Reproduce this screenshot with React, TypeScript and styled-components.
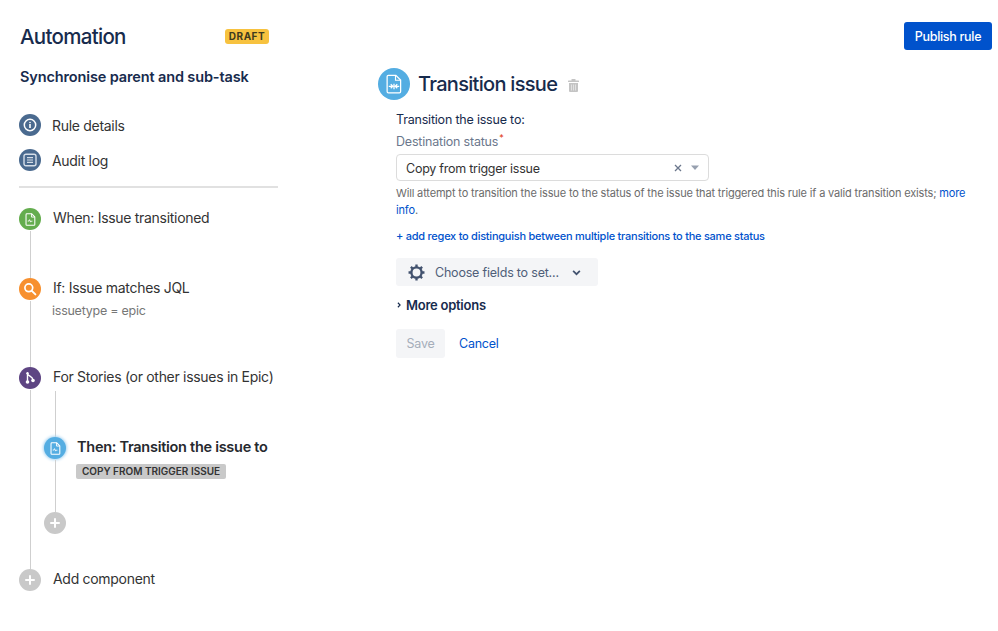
import React from "react";
import styled, { createGlobalStyle } from "styled-components";

const GlobalStyle = createGlobalStyle`
	html, body {
		margin: 0;
		padding: 0;
		background: #fff;
		font-family: Inter, "Liberation Sans", sans-serif;
		-webkit-font-smoothing: antialiased;
	}
	* {
		box-sizing: border-box;
	}
`;

const Page = styled.div`
	width: 998px;
	height: 631px;
	display: flex;
	overflow: hidden;
`;

const Sidebar = styled.aside`
	width: 259px;
	margin-left: 19px;
	flex-shrink: 0;
	padding-top: 23px;
`;

const SidebarHeader = styled.header`
	display: flex;
	align-items: center;
	justify-content: space-between;
	height: 27px;
	padding: 0 9px 0 1px;
`;

const AppTitle = styled.h1`
	margin: 0;
	font-size: 20.5px;
	font-weight: 500;
	letter-spacing: -0.7px;
	color: #172b4d;
`;

const DraftBadge = styled.span`
	height: 15px;
	width: 44px;
	border-radius: 3px;
	background: #f7c23f;
	color: #3f3a1e;
	font-size: 10px;
	font-weight: 700;
	letter-spacing: 0.5px;
	line-height: 15px;
	text-align: center;
`;

const RuleName = styled.h2`
	margin: 17px 0 0 1px;
	font-size: 14.5px;
	line-height: 20px;
	font-weight: 600;
	letter-spacing: -0.13px;
	color: #172b4d;
	white-space: nowrap;
`;

const NavList = styled.nav`
	margin-top: 27px;
	display: flex;
	flex-direction: column;
	gap: 13px;
`;

const NavItem = styled.div`
	display: flex;
	align-items: center;
	gap: 11px;
	height: 22px;
	font-size: 14px;
	letter-spacing: -0.3px;
	color: #333;
`;

const Circle = styled.div<{ $bg: string; $size?: number; $glow?: boolean }>`
	width: ${(props) => props.$size ?? 22}px;
	height: ${(props) => props.$size ?? 22}px;
	border-radius: 50%;
	background: ${(props) => props.$bg};
	flex-shrink: 0;
	display: flex;
	align-items: center;
	justify-content: center;
	box-shadow: ${(props) => (props.$glow ? "0 0 3px 1px #a9d5f2" : "none")};
`;

const Divider = styled.hr`
	margin: 15px 0 20px;
	border: 0;
	height: 2px;
	background: #e1e1e1;
`;

const Step = styled.div<{ $height: number }>`
	display: flex;
	gap: 12px;
	height: ${(props) => props.$height}px;
`;

const Rail = styled.div`
	width: 22px;
	flex-shrink: 0;
	display: flex;
	flex-direction: column;
	align-items: center;
`;

const RailLine = styled.div`
	flex: 1;
	width: 1px;
	background: #cfcfcf;
	margin-top: 1px;
`;

const StepBody = styled.div`
	min-width: 0;
	flex: 1;
`;

const StepTitle = styled.div<{ $bold?: boolean }>`
	margin: -1px 0 0 ${(props) => (props.$bold ? -1 : 0)}px;
	font-size: ${(props) => (props.$bold ? 14.5 : 14)}px;
	line-height: 22px;
	letter-spacing: ${(props) => (props.$bold ? -0.28 : -0.3)}px;
	font-weight: ${(props) => (props.$bold ? 600 : 400)};
	color: ${(props) => (props.$bold ? "#26292e" : "#333")};
	white-space: nowrap;
`;

const StepNote = styled.div`
	margin-top: 2px;
	margin-left: -1px;
	font-size: 12.5px;
	letter-spacing: -0.25px;
	line-height: 20px;
	color: #777;
`;

const NestedFlow = styled.div`
	margin: 2px 0 0 -9px;
`;

const NestedLead = styled.div`
	width: 22px;
	height: 47px;
	display: flex;
	flex-direction: column;
	align-items: center;
`;

const Tag = styled.span`
	display: block;
	width: 150px;
	height: 15px;
	margin: 6px 0 0 -2px;
	border-radius: 2px;
	background: #c9c9c9;
	color: #333;
	font-size: 10px;
	font-weight: 600;
	line-height: 15px;
	text-align: center;
	white-space: nowrap;
`;

const Main = styled.main`
	flex: 1;
	padding: 22px 6px 0 100px;
	display: flex;
	flex-direction: column;
`;

const TopBar = styled.div`
	display: flex;
	justify-content: flex-end;
`;

const PublishButton = styled.button`
	width: 88px;
	height: 28px;
	border: 0;
	border-radius: 3px;
	background: #0052cc;
	color: #fff;
	font: 500 12.5px Inter, sans-serif;
	letter-spacing: -0.3px;
`;

const EditorHeader = styled.div`
	margin-top: 18px;
	display: flex;
	align-items: center;
	gap: 8px;
`;

const EditorTitle = styled.h2`
	margin: 0;
	font-size: 20px;
	font-weight: 500;
	letter-spacing: -0.7px;
	color: #172b4d;
`;

const TrashButton = styled.span`
	margin-left: 3px;
	margin-top: 3px;
	display: flex;
`;

const Form = styled.form`
	margin: 10px 0 0 18px;
	display: flex;
	flex-direction: column;
	align-items: flex-start;
`;

const Lead = styled.div`
	font-size: 12.5px;
	letter-spacing: -0.2px;
	line-height: 20px;
	color: #172b4d;
`;

const FieldLabel = styled.label`
	margin-top: 2px;
	font-size: 12.5px;
	letter-spacing: -0.2px;
	line-height: 20px;
	color: #6b778c;
	sup {
		color: #de350b;
		font-size: 9px;
		line-height: 0;
		margin-left: 1px;
	}
`;

const SelectBox = styled.div`
	margin-top: 2px;
	width: 313px;
	height: 27px;
	border: 1px solid #dcdcdc;
	border-radius: 4px;
	padding: 1px 4px 0 9px;
	display: flex;
	align-items: center;
	font-size: 12.5px;
	letter-spacing: -0.25px;
	color: #333;
`;

const SelectValue = styled.span`
	flex: 1;
`;

const Helper = styled.p`
	margin: 4px 0 0;
	width: 575px;
	font-size: 11px;
	letter-spacing: -0.16px;
	line-height: 17px;
	color: #6b6b6b;
	a {
		color: #0052cc;
		text-decoration: none;
	}
`;

const RegexLink = styled.a`
	margin-top: 9px;
	font-size: 11px;
	letter-spacing: -0.25px;
	line-height: 17px;
	font-weight: 500;
	color: #0052cc;
`;

const FieldsButton = styled.div`
	margin-top: 13px;
	width: 202px;
	height: 28px;
	border-radius: 3px;
	background: #f4f5f7;
	padding: 0 12px;
	display: flex;
	align-items: center;
	font-size: 12.5px;
	letter-spacing: -0.2px;
	color: #505f79;
	white-space: nowrap;
	span {
		margin: 0 13px 0 10px;
	}
`;

const MoreOptions = styled.div`
	margin-top: 9px;
	display: flex;
	align-items: center;
	gap: 4px;
	font-size: 13px;
	letter-spacing: -0.25px;
	line-height: 20px;
	font-weight: 600;
	color: #172b4d;
`;

const Actions = styled.div`
	margin-top: 14px;
	display: flex;
	align-items: center;
	gap: 14px;
`;

const SaveButton = styled.div`
	width: 49px;
	height: 29px;
	border-radius: 3px;
	background: #f4f5f7;
	color: #a5adba;
	font-size: 12.5px;
	letter-spacing: -0.25px;
	line-height: 29px;
	text-align: center;
`;

const CancelLink = styled.a`
	font-size: 12.5px;
	letter-spacing: -0.25px;
	color: #0052cc;
`;

function DocIcon({ size = 13, big = false }: { size?: number; big?: boolean }) {
	return (
		<svg width={size} height={size} viewBox="0 0 16 16" fill="none">
			<path
				d="M3.500 1h6l3.800 3.800v9.200a1 1 0 0 1-1 1H3.500a1 1 0 0 1-1-1V2a1 1 0 0 1 1-1z"
				stroke="#fff"
				strokeWidth={big ? 1 : 1.3}
			/>
			<path d="M9.200 1v4h4" stroke="#fff" strokeWidth={big ? 0.9 : 1.1} />
			{big ? (
				<path
					d="M3.800 9.800h3M5.400 8.200l1.600 1.600-1.600 1.600M12.200 9.800h-3M10.600 8.200l-1.600 1.600 1.600 1.600M8 7.800v4.400"
					stroke="#fff"
					strokeWidth="1"
				/>
			) : (
				<path d="M4.600 10h1.200l1-1.800 1.300 3 1-1.200h1.300" stroke="#fff" strokeWidth="1.100" />
			)}
		</svg>
	);
}

function InfoIcon() {
	return (
		<svg width="14" height="14" viewBox="0 0 14 14" fill="none">
			<circle cx="7" cy="7" r="5.700" stroke="#fff" strokeWidth="1.500" />
			<rect x="6.200" y="6" width="1.600" height="4" fill="#fff" />
			<rect x="6.200" y="3.700" width="1.600" height="1.600" rx="0.800" fill="#fff" />
		</svg>
	);
}

function ListIcon() {
	return (
		<svg width="14" height="14" viewBox="0 0 14 14" fill="none">
			<rect x="1" y="1.200" width="12" height="11.600" rx="2" stroke="#d5dee8" strokeWidth="1.400" />
			<path d="M4 4.700h6M4 7h6M4 9.300h6" stroke="#d5dee8" strokeWidth="1.200" />
		</svg>
	);
}

function SearchIcon() {
	return (
		<svg width="14" height="14" viewBox="0 0 14 14" fill="none">
			<circle cx="5.800" cy="5.800" r="3.900" stroke="#fff" strokeWidth="1.700" />
			<path d="M8.800 8.800l3.600 3.600" stroke="#fff" strokeWidth="1.900" strokeLinecap="round" />
		</svg>
	);
}

function BranchIcon() {
	return (
		<svg width="14" height="14" viewBox="0 0 14 14" fill="none">
			<path d="M4.500 2v9M4.500 2.500c.5 3 5 2.500 5.500 6.500" stroke="#fff" strokeWidth="1.400" />
			<circle cx="4.500" cy="11" r="1.800" fill="#fff" />
			<circle cx="10" cy="9.500" r="1.800" fill="#fff" />
			<circle cx="4.500" cy="2.300" r="1.200" fill="#fff" />
		</svg>
	);
}

function PlusIcon() {
	return (
		<svg width="10" height="10" viewBox="0 0 10 10">
			<path d="M5 1v8M1 5h8" stroke="#fff" strokeWidth="2" strokeLinecap="round" />
		</svg>
	);
}

function TrashIcon() {
	return (
		<svg width="11" height="13" viewBox="0 0 11 13" fill="#c4c4c4">
			<rect x="0" y="1.500" width="11" height="1.500" rx="0.500" />
			<rect x="3.500" y="0" width="4" height="2" rx="0.500" />
			<path d="M1 4h9v8a1 1 0 0 1-1 1H2a1 1 0 0 1-1-1z" />
			<path d="M3.500 5.500v6M5.500 5.500v6M7.500 5.500v6" stroke="#eee" strokeWidth="0.700" />
		</svg>
	);
}

function GearIcon() {
	return (
		<svg width="17" height="17" viewBox="0 0 16 16" fill="none">
			<circle cx="8" cy="8" r="4.800" stroke="#42526e" strokeWidth="2.200" />
			<path
				d="M8 .5v2.500M8 13v2.500M.5 8H3M13 8h2.500M2.700 2.700l1.800 1.800M11.500 11.500l1.800 1.800M13.300 2.700l-1.800 1.800M4.500 11.500l-1.800 1.800"
				stroke="#42526e"
				strokeWidth="2.200"
			/>
		</svg>
	);
}

function Chevron({ rotate = 0, color = "#42526e", size = 8 }: { rotate?: number; color?: string; size?: number }) {
	return (
		<svg width={size} height={size} viewBox="0 0 8 8" fill="none" transform={`rotate(${rotate})`}>
			<path d="M1 2.500L4 5.500L7 2.500" stroke={color} strokeWidth="1.500" />
		</svg>
	);
}

export default function App() {
	return (
		<Page>
			<GlobalStyle />
			<Sidebar>
				<SidebarHeader>
					<AppTitle>Automation</AppTitle>
					<DraftBadge>DRAFT</DraftBadge>
				</SidebarHeader>
				<RuleName>Synchronise parent and sub-task</RuleName>
				<NavList>
					<NavItem>
						<Circle $bg="#4a6a8f">
							<InfoIcon />
						</Circle>
						Rule details
					</NavItem>
					<NavItem>
						<Circle $bg="#4a6a8f">
							<ListIcon />
						</Circle>
						Audit log
					</NavItem>
				</NavList>
				<Divider />
				<Step $height={70}>
					<Rail>
						<Circle $bg="#64ad4e">
							<DocIcon />
						</Circle>
						<RailLine />
					</Rail>
					<StepBody>
						<StepTitle>When: Issue transitioned</StepTitle>
					</StepBody>
				</Step>
				<Step $height={89}>
					<Rail>
						<Circle $bg="#f7902f">
							<SearchIcon />
						</Circle>
						<RailLine />
					</Rail>
					<StepBody>
						<StepTitle>If: Issue matches JQL</StepTitle>
						<StepNote>issuetype = epic</StepNote>
					</StepBody>
				</Step>
				<Step $height={202}>
					<Rail>
						<Circle $bg="#5e4583">
							<BranchIcon />
						</Circle>
						<RailLine />
					</Rail>
					<StepBody>
						<StepTitle>For Stories (or other issues in Epic)</StepTitle>
						<NestedFlow>
							<NestedLead>
								<RailLine />
							</NestedLead>
							<Step $height={75}>
								<Rail>
									<Circle $bg="#54ade2" $glow>
										<DocIcon />
									</Circle>
									<RailLine />
								</Rail>
								<StepBody>
									<StepTitle $bold>Then: Transition the issue to</StepTitle>
									<Tag>COPY FROM TRIGGER ISSUE</Tag>
								</StepBody>
							</Step>
							<Circle $bg="#c9c9c9">
								<PlusIcon />
							</Circle>
						</NestedFlow>
					</StepBody>
				</Step>
				<Step $height={22}>
					<Rail>
						<Circle $bg="#c9c9c9">
							<PlusIcon />
						</Circle>
					</Rail>
					<StepBody>
						<StepTitle>Add component</StepTitle>
					</StepBody>
				</Step>
			</Sidebar>
			<Main>
				<TopBar>
					<PublishButton>Publish rule</PublishButton>
				</TopBar>
				<EditorHeader>
					<Circle $bg="#54ade2" $size={32}>
						<DocIcon size={20} big />
					</Circle>
					<EditorTitle>Transition issue</EditorTitle>
					<TrashButton>
						<TrashIcon />
					</TrashButton>
				</EditorHeader>
				<Form>
					<Lead>Transition the issue to:</Lead>
					<FieldLabel>
						Destination status<sup>*</sup>
					</FieldLabel>
					<SelectBox>
						<SelectValue>Copy from trigger issue</SelectValue>
						<svg width="30" height="10" viewBox="0 0 30 10" fill="none">
							<path d="M1 2l6 6M7 2l-6 6" stroke="#6b778c" strokeWidth="1.300" />
							<path d="M17 2.500h8l-4 4.500z" fill="#97a0af" />
						</svg>
					</SelectBox>
					<Helper>
						Will attempt to transition the issue to the status of the issue that triggered this rule if a valid
						transition exists; <a href="#more">more info</a>.
					</Helper>
					<RegexLink>+ add regex to distinguish between multiple transitions to the same status</RegexLink>
					<FieldsButton>
						<GearIcon />
						<span>Choose fields to set...</span>
						<Chevron size={9} />
					</FieldsButton>
					<MoreOptions>
						<Chevron rotate={-90} color="#172b4d" size={6} />
						More options
					</MoreOptions>
					<Actions>
						<SaveButton>Save</SaveButton>
						<CancelLink>Cancel</CancelLink>
					</Actions>
				</Form>
			</Main>
		</Page>
	);
}
